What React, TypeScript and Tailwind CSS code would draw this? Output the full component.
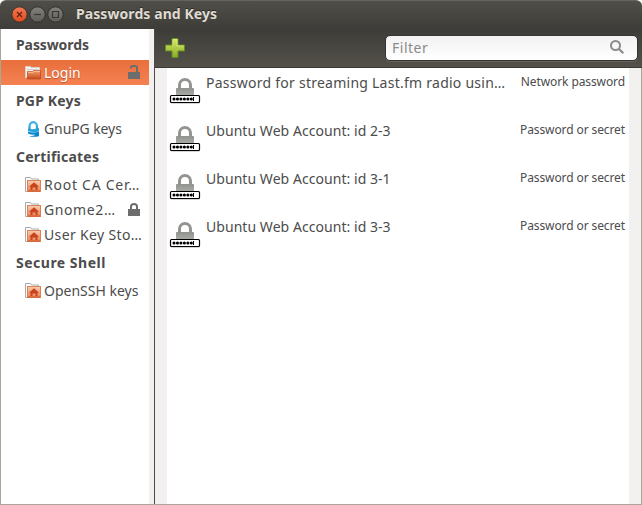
import React from "react";

function FolderIcon() {
  return (
    <svg width="16" height="16" viewBox="0 0 16 16" className="shrink-0">
      <defs>
        <linearGradient id="folder" x1="0" y1="0" x2="0" y2="1">
          <stop offset="0" stopColor="#f3a06c" />
          <stop offset="1" stopColor="#c8491c" />
        </linearGradient>
      </defs>
      <path d="M.5 13V1.500h5l1 1h8V6" fill="#f5f1ee" stroke="#d8cfc9" />
      <path d="M2 4.500h11" stroke="#d4cdc9" />
      <path d="M2.500 6.500h5l1-1h7v8.500H2.500z" fill="url(#folder)" stroke="#b8502a" strokeWidth=".8" />
      <path d="M3 7.300h5l1-1h6" fill="none" stroke="#ffd0ad" strokeWidth=".8" />
    </svg>
  );
}

function HomeFolderIcon() {
  return (
    <svg width="17" height="16" viewBox="0 0 17 16" className="-mr-px shrink-0">
      <defs>
        <linearGradient id="home" x1="0" y1="0" x2="0" y2="1">
          <stop offset="0" stopColor="#f8ceb2" />
          <stop offset="1" stopColor="#e88252" />
        </linearGradient>
      </defs>
      <path d="M2.500 14.500H.5V.5h5l1 1.500h7V4" fill="#fff" stroke="#aaa" />
      <rect x="2.500" y="3.500" width="13" height="11" fill="url(#home)" stroke="#dc8058" />
      <path d="M9 5.300 14 9.700h-1.500V13h-2v-2.500h-3V13h-2V9.700H4z" fill="#c9431d" />
      <path d="M3 14h12" stroke="#d05328" />
    </svg>
  );
}

function GnuPGIcon() {
  return (
    <svg width="16" height="18" viewBox="0 0 16 18" className="shrink-0">
      <path d="M4.500 9.500V6.500a3.700 4.300 0 0 1 7.500 0V9" fill="none" stroke="#279fdc" strokeWidth="2.200" />
      <path d="M4.500 6.500a3.700 4.300 0 0 1 7.500 0" fill="none" stroke="#68c3ec" strokeWidth=".8" />
      <path d="M3 8.500Q8 10 14 8v3.200Q9 13 3 11.300z" fill="#27a3df" />
      <path d="M3 11.800Q9 13.400 14 11.500v4.700Q9 17.500 4 16.200 9 16 10.500 14.800 6 15 3 13.600z" fill="#0786cf" />
    </svg>
  );
}

function Padlock({ open = false }: { open?: boolean }) {
  return (
    <svg width="14" height="17" viewBox="0 0 14 17" className="mr-2 shrink-0">
      <path
        d={open ? "M4 4.500V3.500Q4 2 5.500 2h3Q10 2 10 3.500V9" : "M4 9V5.500Q4 3 7 3t3 2.500V9"}
        fill="none" stroke="#6d6d6d" strokeWidth="2"
      />
      <rect x="1" y="8" width="12" height="7" fill="#6d6d6d" />
    </svg>
  );
}

function PasswordIcon() {
  return (
    <svg width="32" height="28" viewBox="0 0 32 28" className="shrink-0">
      <defs>
        <linearGradient id="lock" x1="0" y1="0" x2="0" y2="1">
          <stop offset="0" stopColor="#90928d" />
          <stop offset="1" stopColor="#acaea9" />
        </linearGradient>
      </defs>
      <path d="M10.500 12V8a5.500 5.500 0 0 1 11 0v4" fill="none" stroke="#929590" strokeWidth="3" />
      <rect x="7" y="11" width="18" height="8" rx="1" fill="url(#lock)" />
      <rect x="1.500" y="18.500" width="29" height="7" rx="1" fill="#fff" stroke="#000" strokeWidth="1.200" />
      <path d="M2.500 26.500h28" stroke="#aaa" strokeWidth=".5" />
      <path d="M5 22h17.600" stroke="#000" strokeWidth="3.100" strokeLinecap="round" strokeDasharray="0.010 3.450" />
      <path d="M24.500 20v4" stroke="#000" />
    </svg>
  );
}

function WindowButton({ kind }: { kind: "close" | "min" | "max" }) {
  return (
    <svg width="18" height="18" viewBox="0 0 18 18">
      <defs>
        <linearGradient id="red" x1="0" y1="0" x2="0" y2="1">
          <stop offset="0" stopColor="#f37955" /><stop offset="1" stopColor="#df4b1c" />
        </linearGradient>
        <linearGradient id="gray" x1="0" y1="0" x2="0" y2="1">
          <stop offset="0" stopColor="#83817a" /><stop offset="1" stopColor="#605e58" />
        </linearGradient>
      </defs>
      <circle cx="9.500" cy="8.500" r="7.700" fill={kind === "close" ? "url(#red)" : "url(#gray)"} stroke="#31302c" />
      <path
        d={kind === "close" ? "m7 6 5 5m0-5-5 5" : kind === "min" ? "M6 8.500h7" : "M6.500 5.500h6v6h-6z"}
        fill="none" stroke={kind === "close" ? "#612310" : "#393833"} strokeWidth="1.200"
      />
    </svg>
  );
}

function Heading({ text, spacing }: { text: string; spacing: string }) {
  return <h2 className={"h-[31px] pl-[15px] text-[14px] font-bold leading-[31px] " + spacing}>{text}</h2>;
}

type ItemProps = {
  text: string;
  spacing: string;
  icon: React.ReactNode;
  lock?: React.ReactNode;
  selected?: boolean;
};

function Item({ text, spacing, icon, lock, selected = false }: ItemProps) {
  return (
    <div
      className={
        "flex h-[25px] items-center pl-6 text-[14px] leading-[25px] " +
        (selected ? "bg-linear-to-b from-[#e86f3b] to-[#f58152] text-white [text-shadow:0_1px_1px_#b8502a]" : "")
      }
    >
      {icon}
      <span className={"ml-[3px] grow " + spacing}>{text}</span>
      {lock}
    </div>
  );
}

const entries = [
  { name: "Password for streaming Last.fm radio usin…", type: "Network password", spacing: "tracking-[0.25px]", typeSpacing: "tracking-[-0.1px]" },
  { name: "Ubuntu Web Account: id 2-3", type: "Password or secret", spacing: "tracking-[0.05px]", typeSpacing: "tracking-[-0.1px]" },
  { name: "Ubuntu Web Account: id 3-1", type: "Password or secret", spacing: "tracking-[0.05px]", typeSpacing: "tracking-[-0.1px]" },
  { name: "Ubuntu Web Account: id 3-3", type: "Password or secret", spacing: "tracking-[0.05px]", typeSpacing: "tracking-[-0.1px]" },
];

export default function App() {
  return (
    <div className="flex h-[505px] w-[642px] flex-col overflow-hidden whitespace-nowrap bg-white font-['Noto_Sans','Open_Sans',sans-serif] text-[#4c4c4c]">
      <header className="flex h-[29px] shrink-0 items-center rounded-t-md border-t border-[#65635c] bg-linear-to-b from-[#504e47] to-[#3e3d39] pl-[10px]">
        <WindowButton kind="close" />
        <WindowButton kind="min" />
        <WindowButton kind="max" />
        <h1 className="mb-[3px] ml-3 text-[14px] font-bold leading-[25px] tracking-[0.08px] text-[#dfdbd2] [text-shadow:0_-1px_0_#292824]">Passwords and Keys</h1>
      </header>
      <div className="flex min-h-0 grow border-x border-b border-[#aaa69e]">
        <aside className="w-[148px] shrink-0 bg-white">
          <Heading text="Passwords" spacing="tracking-[-0.1px]" />
          <Item text="Login" spacing="" icon={<FolderIcon />} lock={<Padlock open />} selected />
          <Heading text="PGP Keys" spacing="tracking-[0.17px]" />
          <Item text="GnuPG keys" spacing="tracking-[-0.1px]" icon={<GnuPGIcon />} />
          <Heading text="Certificates" spacing="tracking-[0.22px]" />
          <Item text="Root CA Cer…" spacing="tracking-[0.75px]" icon={<HomeFolderIcon />} />
          <Item text="Gnome2…" spacing="tracking-[0.6px]" icon={<HomeFolderIcon />} lock={<Padlock />} />
          <Item text="User Key Sto…" spacing="tracking-[0.36px]" icon={<HomeFolderIcon />} />
          <Heading text="Secure Shell" spacing="tracking-[0.5px]" />
          <Item text="OpenSSH keys" spacing="" icon={<HomeFolderIcon />} />
        </aside>
        <div className="w-[5px] shrink-0 bg-[#f2f1f0]" />
        <main className="flex min-w-0 grow flex-col border-l border-[#4c4b48] bg-[#f2f1f0]">
          <div className="-mr-px flex h-[39px] shrink-0 items-center border-b border-[#3b3935] bg-linear-to-b from-[#3d3c38] to-[#54514a] pl-[9px] pr-1">
            <svg width="22" height="23" viewBox="0 0 22 23">
              <defs>
                <linearGradient id="plus" x1="0" y1="0" x2="0" y2="1">
                  <stop stopColor="#d8e866" /><stop offset="1" stopColor="#8aac28" />
                </linearGradient>
              </defs>
              <path d="M8 1.500h6V8h6.500v6H14v6.500H8V14H1.500V8H8z" fill="url(#plus)" stroke="#608c23" />
              <path d="M9 8.900V2.500h4V9h6.500" fill="none" stroke="#e0ee90" strokeWidth=".7" />
            </svg>
            <div className="mb-px ml-auto flex h-[26px] w-[253px] items-center rounded-[5px] border border-[#353430] bg-linear-to-b from-[#f2f2f2] to-white px-[6px] text-[14px] text-[#8b8b8b] shadow-[0_1px_0_#67645d]">
              <span className="tracking-[0.5px]">Filter</span>
              <svg width="16" height="16" viewBox="0 0 16 16" className="mb-px ml-auto mr-[6px]">
                <circle cx="6.500" cy="6.500" r="4.500" fill="none" stroke="#8b8b8b" strokeWidth="2" />
                <path d="m10 10 4.300 4.300" stroke="#8b8b8b" strokeWidth="2.200" />
              </svg>
            </div>
          </div>
          <section className="mx-3 grow bg-white">
            {entries.map((entry) => (
              <div key={entry.name} className="flex h-12 items-start pl-[2px] pr-1">
                <div className="pt-[9px]"><PasswordIcon /></div>
                <span className={"ml-[5px] pt-[5px] text-[14px] leading-5 " + entry.spacing}>{entry.name}</span>
                <span className={"ml-auto pt-[4px] text-[12px] leading-5 " + entry.typeSpacing}>{entry.type}</span>
              </div>
            ))}
          </section>
        </main>
      </div>
    </div>
  );
}
